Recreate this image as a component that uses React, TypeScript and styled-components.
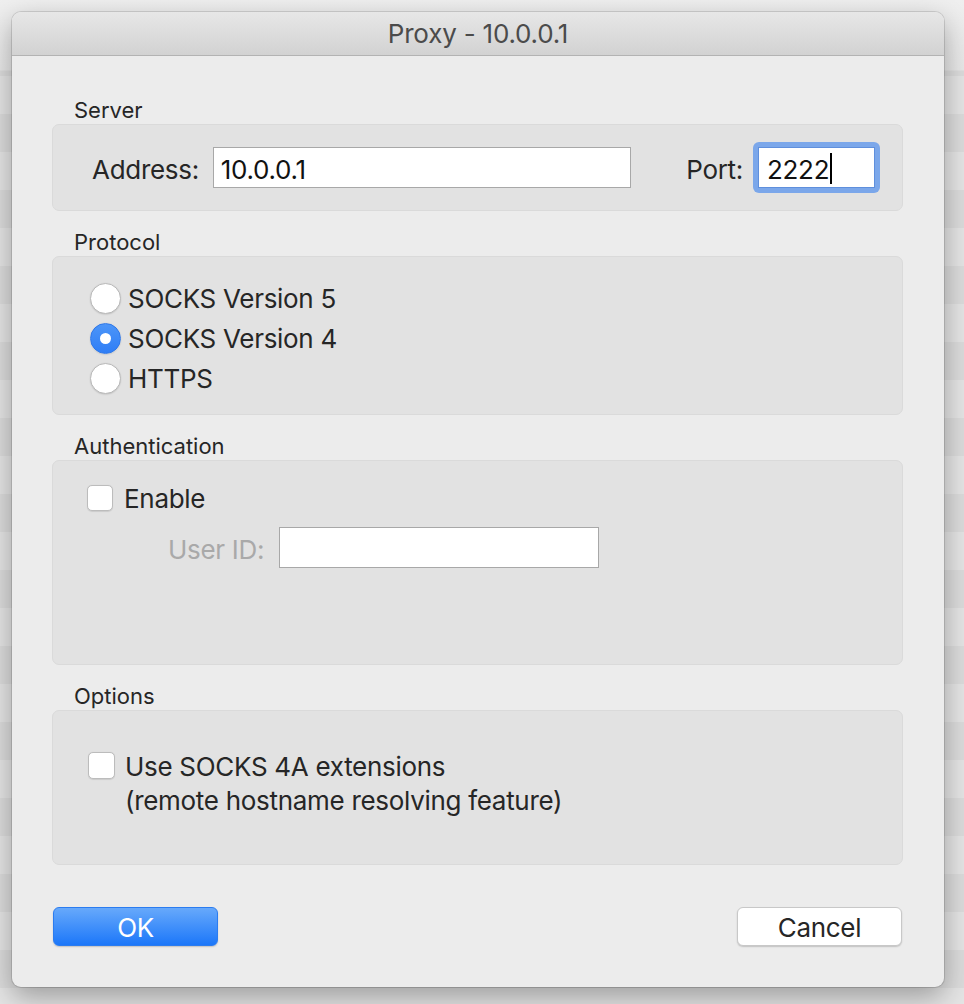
import React from "react";
import styled, { createGlobalStyle } from "styled-components";

const Global = createGlobalStyle`
  html, body { margin: 0; padding: 0; }
  body {
    font-family: Inter, "Noto Sans", "Liberation Sans", sans-serif;
    -webkit-font-smoothing: antialiased;
  }
`;

const Page = styled.div`
  width: 964px;
  height: 1004px;
  box-sizing: border-box;
  padding: 12px 20px 0 12px;
  overflow: hidden;
  background:
    linear-gradient(180deg, #efefef 0px, #e8e8e8 70px, rgba(0,0,0,0) 71px),
    repeating-linear-gradient(
      180deg,
      #e5e5e5 0px,
      #e5e5e5 38px,
      #dcdcdc 38px,
      #dcdcdc 76px
    );
`;

const Dialog = styled.div`
  width: 932px;
  height: 975px;
  background: #ececec;
  border-radius: 9px;
  box-shadow: 0 0 0 1px rgba(0, 0, 0, 0.12), 0 10px 28px rgba(0, 0, 0, 0.32);
  display: flex;
  flex-direction: column;
  overflow: hidden;
`;

const TitleBar = styled.div`
  height: 43px;
  flex: none;
  background: linear-gradient(180deg, #e7e7e7 0%, #d2d2d2 100%);
  border-bottom: 1px solid #b3b3b3;
  display: flex;
  align-items: center;
  justify-content: center;
  font-size: 26px;
  color: #4b4b4b;
  letter-spacing: -0.2px;
`;

const Body = styled.div`
  flex: 1;
  display: flex;
  flex-direction: column;
  padding: 42px 41px 0 40px;
`;

const Section = styled.section`
  display: flex;
  flex-direction: column;
  margin-bottom: 19px;
`;

const SectionLabel = styled.div`
  height: 24px;
  line-height: 24px;
  padding-left: 22px;
  margin-bottom: 2px;
  font-size: 22px;
  color: #262626;
`;

const Box = styled.div<{ $h: number }>`
  height: ${(p) => p.$h}px;
  box-sizing: border-box;
  background: #e2e2e2;
  border: 1px solid #dadada;
  border-radius: 7px;
`;

const ServerBox = styled(Box)`
  display: flex;
  align-items: center;
  padding: 0 22px 0 39px;
`;

const FieldLabel = styled.span<{ $dim?: boolean }>`
  font-size: 26px;
  color: ${(p) => (p.$dim ? "#a9a9a9" : "#262626")};
  letter-spacing: -0.3px;
  position: relative;
  top: 2px;
`;

const TextInput = styled.div<{ $w: number; $gap?: number }>`
  width: ${(p) => p.$w}px;
  height: 41px;
  margin-left: ${(p) => p.$gap ?? 0}px;
  box-sizing: border-box;
  background: #fff;
  border: 1px solid #a8a8a8;
  display: flex;
  align-items: center;
  padding: 3px 0 0 7px;
  font-size: 26px;
  color: #111;
  letter-spacing: -0.3px;
`;

const Spacer = styled.div`
  flex: 1;
`;

const FocusRing = styled.div`
  margin-left: 10px;
  padding: 5px;
  background: #7ba7ea;
  border-radius: 6px;
  display: flex;
`;

const FocusedInput = styled(TextInput)`
  border-color: #5f8fdc;
  padding-left: 8px;
`;

const Caret = styled.span`
  display: inline-block;
  width: 2px;
  height: 31px;
  background: #000;
  margin: -2px 0 0 1px;
`;

const RadioList = styled(Box)`
  display: flex;
  flex-direction: column;
  padding: 21px 0 0 37px;
`;

const OptionRow = styled.label`
  height: 40px;
  display: flex;
  align-items: center;
  gap: 7px;
  font-size: 26px;
  color: #262626;
  letter-spacing: -0.3px;
`;

const Radio = styled.span<{ $on?: boolean }>`
  width: 31px;
  height: 31px;
  box-sizing: border-box;
  border-radius: 50%;
  flex: none;
  display: flex;
  align-items: center;
  justify-content: center;
  background: ${(p) =>
    p.$on ? "linear-gradient(180deg, #4c95f8 0%, #2f7ef6 100%)" : "#fff"};
  border: 1px solid ${(p) => (p.$on ? "#2f78e8" : "#b9b9b9")};
  box-shadow: 0 0.5px 1.5px rgba(0, 0, 0, 0.15);

  &::after {
    content: "";
    display: ${(p) => (p.$on ? "block" : "none")};
    width: 11px;
    height: 11px;
    border-radius: 50%;
    background: #fff;
  }
`;

const Check = styled.span`
  width: 26px;
  height: 26px;
  box-sizing: border-box;
  flex: none;
  background: #fff;
  border: 1px solid #bcbcbc;
  border-radius: 5px;
  box-shadow: 0 0.5px 1px rgba(0, 0, 0, 0.1);
`;

const AuthBox = styled(Box)`
  display: flex;
  flex-direction: column;
  padding: 19px 0 0 34px;
`;

const CheckRow = styled.label`
  height: 36px;
  display: flex;
  align-items: center;
  gap: 11px;
  font-size: 26px;
  color: #262626;
  letter-spacing: -0.3px;
`;

const UserRow = styled.div`
  margin-top: 11px;
  margin-left: 81px;
  display: flex;
  align-items: center;
  gap: 15px;
`;

const OptionsBox = styled(Box)`
  display: flex;
  padding: 39px 0 0 35px;
`;

const CheckBlock = styled.label`
  display: flex;
  align-items: flex-start;
  gap: 10px;
  font-size: 26px;
  color: #262626;
  letter-spacing: -0.3px;
  line-height: 34px;

  ${Check} {
    margin-top: 2px;
    width: 27px;
    height: 27px;
  }
`;

const ButtonRow = styled.div`
  margin-top: 23px;
  display: flex;
  justify-content: space-between;
  padding: 0 1px 0 1px;
`;

const Button = styled.button<{ $primary?: boolean }>`
  width: 165px;
  height: 39px;
  border-radius: 6px;
  font-family: inherit;
  font-size: 26px;
  letter-spacing: -0.3px;
  padding: 2px 0 0;
  cursor: default;
  color: ${(p) => (p.$primary ? "#fff" : "#262626")};
  background: ${(p) =>
    p.$primary ? "linear-gradient(180deg, #67a9fb 0%, #1c77f9 100%)" : "#fff"};
  border: ${(p) => (p.$primary ? "1px solid #2b7cf0" : "1px solid #c8c8c8")};
  box-shadow: 0 1px 1.5px rgba(0, 0, 0, 0.18);
`;

export default function App() {
  return (
    <>
      <Global />
      <Page>
        <Dialog>
          <TitleBar>Proxy - 10.0.0.1</TitleBar>
          <Body>
            <Section>
              <SectionLabel>Server</SectionLabel>
              <ServerBox $h={87}>
                <FieldLabel>Address:</FieldLabel>
                <TextInput $w={418} $gap={14}>
                  10.0.0.1
                </TextInput>
                <Spacer />
                <FieldLabel>Port:</FieldLabel>
                <FocusRing>
                  <FocusedInput $w={117}>
                    2222
                    <Caret />
                  </FocusedInput>
                </FocusRing>
              </ServerBox>
            </Section>

            <Section>
              <SectionLabel>Protocol</SectionLabel>
              <RadioList $h={159}>
                <OptionRow>
                  <Radio />
                  SOCKS Version 5
                </OptionRow>
                <OptionRow>
                  <Radio $on />
                  SOCKS Version 4
                </OptionRow>
                <OptionRow>
                  <Radio />
                  HTTPS
                </OptionRow>
              </RadioList>
            </Section>

            <Section>
              <SectionLabel>Authentication</SectionLabel>
              <AuthBox $h={205}>
                <CheckRow>
                  <Check />
                  Enable
                </CheckRow>
                <UserRow>
                  <FieldLabel $dim>User ID:</FieldLabel>
                  <TextInput $w={320} />
                </UserRow>
              </AuthBox>
            </Section>

            <Section>
              <SectionLabel>Options</SectionLabel>
              <OptionsBox $h={155}>
                <CheckBlock>
                  <Check />
                  <span>
                    Use SOCKS 4A extensions
                    <br />
                    (remote hostname resolving feature)
                  </span>
                </CheckBlock>
              </OptionsBox>
            </Section>

            <ButtonRow>
              <Button $primary>OK</Button>
              <Button>Cancel</Button>
            </ButtonRow>
          </Body>
        </Dialog>
      </Page>
    </>
  );
}
